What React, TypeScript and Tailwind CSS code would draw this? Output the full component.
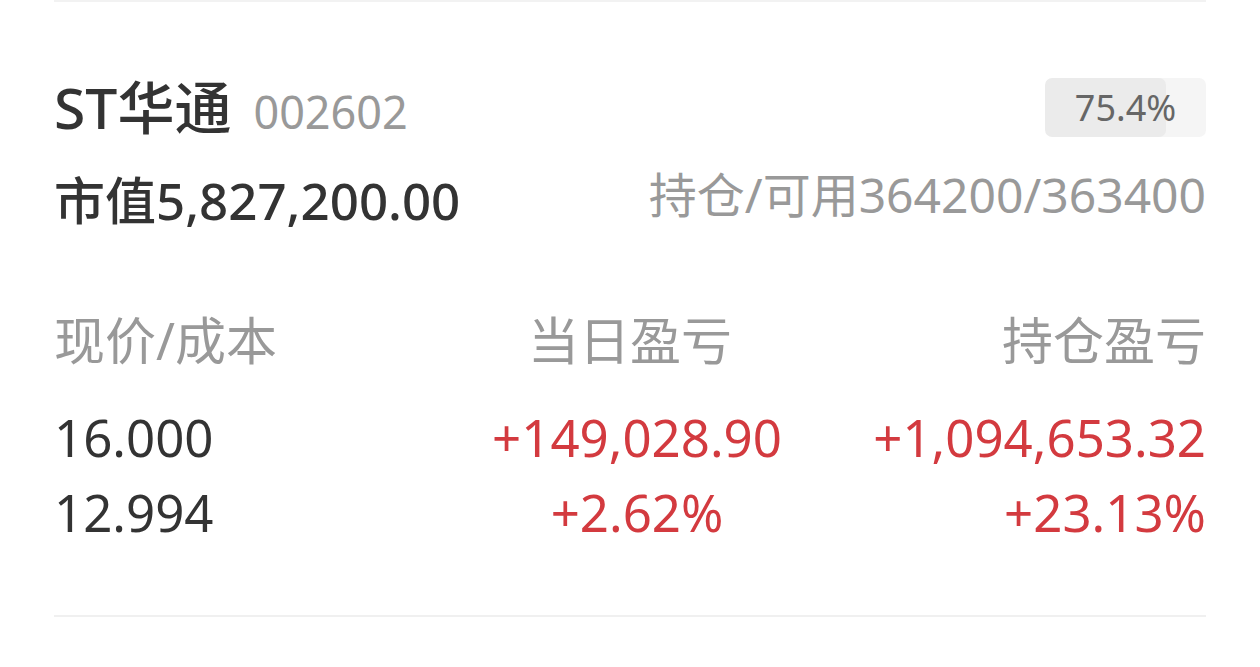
import React from "react";

const font = { fontFamily: '"Noto Sans", "Noto Sans CJK SC", sans-serif' };

const Badge = ({ ratio }: { ratio: number }) => (
  <div className="relative w-[161px] h-[59px] rounded-[7px] bg-[#f5f5f5] overflow-hidden">
    <div
      className="absolute left-0 top-0 h-full rounded-[7px] bg-[#ebebeb]"
      style={{ width: `${ratio}%` }}
    />
    <div className="relative h-full flex items-center justify-center text-[36px] text-[#666666]">
      {ratio}%
    </div>
  </div>
);

const App = () => {
  return (
    <div className="w-[1260px] h-[667px] bg-white px-[54px]" style={font}>
      <div className="border-t-2 border-[#f2f2f2] pt-[76px] border-b-2 border-b-[#f0f0f0] pb-[65px]">
        {/* title row */}
        <div className="h-[59px] flex items-center justify-between">
          <div className="flex items-baseline">
            <span className="text-[57px] font-medium text-[#333333] leading-none">ST华通</span>
            <span className="ml-[22px] text-[45px] text-[#999999] leading-none">002602</span>
          </div>
          <Badge ratio={75.4} />
        </div>

        {/* value row */}
        <div className="mt-[33px] h-[60px] flex items-center justify-between">
          <span className="text-[51px] font-medium text-[#333333] leading-none">市值5,827,200.00</span>
          <span className="text-[48px] text-[#999999] leading-none -mt-[10px]">持仓/可用364200/363400</span>
        </div>

        {/* headers */}
        <div className="mt-[80px] h-[60px] grid grid-cols-3 items-center text-[51px] text-[#999999] leading-none">
          <span className="text-left">现价/成本</span>
          <span className="text-center">当日盈亏</span>
          <span className="text-right">持仓盈亏</span>
        </div>

        {/* values */}
        <div className="mt-[30px] grid grid-cols-3 text-[51px] leading-[75px]">
          <div className="text-left text-[#333333]">
            <div>16.000</div>
            <div>12.994</div>
          </div>
          <div className="text-center text-[#d33a3f] pl-[14px]">
            <div>+149,028.90</div>
            <div>+2.62%</div>
          </div>
          <div className="text-right text-[#d33a3f]">
            <div>+1,094,653.32</div>
            <div>+23.13%</div>
          </div>
        </div>
      </div>
    </div>
  );
};

export default App;
